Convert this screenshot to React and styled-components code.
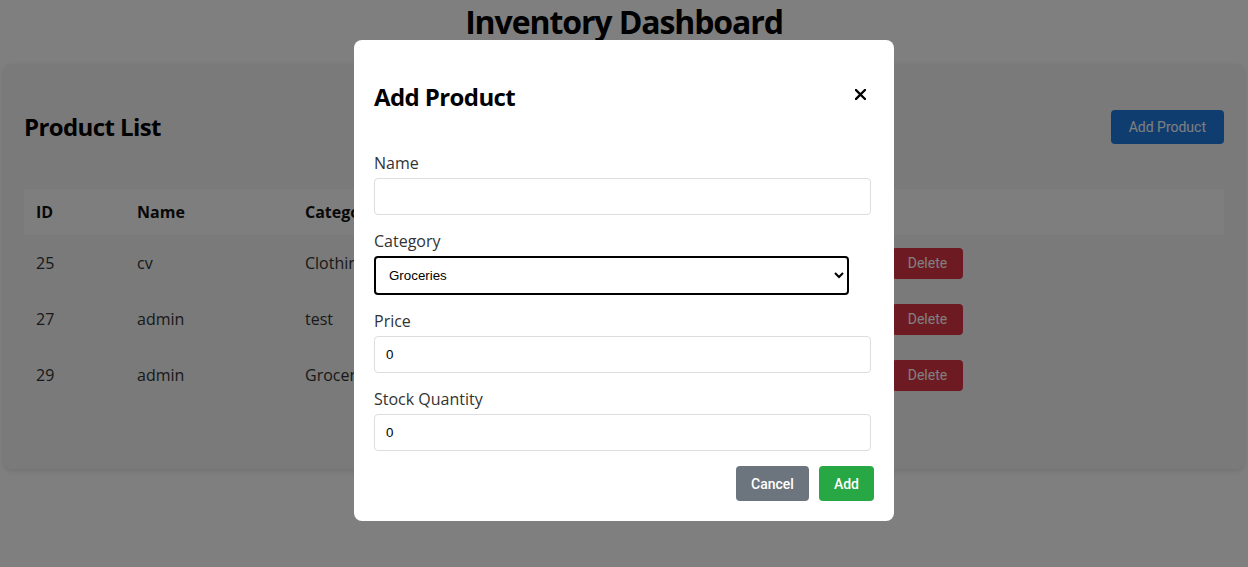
import React from "react";
import styled, { createGlobalStyle } from "styled-components";

const Global = createGlobalStyle`
  html, body { margin: 0; padding: 0; background: #ffffff; }
  body { font-family: "Open Sans", "Noto Sans", sans-serif; color: #333; }
  * { box-sizing: border-box; }
`;

const Page = styled.div`
  padding: 0 4px;
  min-height: 567px;
`;

const Title = styled.h1`
  margin: 0 0 20px;
  text-align: center;
  font-size: 32px;
  line-height: 44px;
  font-weight: 700;
  color: #000;
  letter-spacing: -1.1px;
`;

const Panel = styled.section`
  background: #f4f4f4;
  border-radius: 8px;
  padding: 20px 20px 66px;
  box-shadow: 0 2px 6px rgba(0, 0, 0, 0.12);
`;

const PanelHeader = styled.div`
  display: flex;
  align-items: center;
  justify-content: space-between;
  min-height: 85px;
  margin-bottom: 20px;
`;

const H2 = styled.h2`
  margin: 0;
  font-size: 24px;
  font-weight: 700;
  color: #000;
  letter-spacing: -0.6px;
`;

const Btn = styled.button`
  border: none;
  border-radius: 4px;
  color: #fff;
  font-family: Roboto, "Liberation Sans", sans-serif;
  font-size: 14px;
  font-weight: ${(p) => (p.$bold ? 500 : 400)};
  height: ${(p) => p.$h || 35}px;
  padding: 0 ${(p) => p.$px || 20}px;
  background: ${(p) => p.$bg};
  cursor: pointer;
`;

const Table = styled.table`
  width: 100%;
  border-collapse: collapse;
  font-size: 16px;
`;

const Th = styled.th`
  text-align: left;
  font-weight: 700;
  color: #111;
  padding: 12px;
  height: 45px;
  background: #fdfdfd;
  width: ${(p) => p.$w || "auto"};
`;

const Td = styled.td`
  padding: 12px;
  height: 56px;
  color: #333;
`;

const Actions = styled.div`
  display: flex;
  gap: 8px;
`;

const Overlay = styled.div`
  position: fixed;
  inset: 0;
  background: rgba(0, 0, 0, 0.5);
  display: flex;
  justify-content: center;
  align-items: flex-start;
  padding-top: 40px;
`;

const Modal = styled.div`
  width: 540px;
  background: #fff;
  border-radius: 8px;
  padding: 20px;
`;

const ModalHeader = styled.div`
  display: flex;
  align-items: center;
  justify-content: space-between;
  height: 72px;
  margin-bottom: 20px;
`;

const CloseBtn = styled.button`
  border: none;
  background: none;
  padding: 0 8px 0 0;
  width: 28px;
  height: 28px;
  display: flex;
  align-items: center;
  justify-content: flex-end;
  margin-top: -4px;
  cursor: pointer;
`;

const Group = styled.div`
  margin-bottom: 15px;
  display: flex;
  flex-direction: column;
`;

const Label = styled.label`
  font-size: 16px;
  line-height: 22px;
  color: #333;
  margin-bottom: 4px;
`;

const Input = styled.input`
  width: 497px;
  height: 37px;
  padding: 0 11px;
  border: 1px solid #ddd;
  border-radius: 4px;
  font-family: "Liberation Sans", Arial, sans-serif;
  font-size: 13.33px;
  color: #000;
  outline: none;
`;

const SelectWrap = styled.div`
  position: relative;
  width: 475px;
`;

const Select = styled.select`
  appearance: none;
  width: 100%;
  height: 39px;
  padding: 0 13px;
  border: 2px solid #000;
  border-radius: 4px;
  background: #fff;
  font-family: "Liberation Sans", Arial, sans-serif;
  font-size: 13.33px;
  color: #000;
  outline: none;
`;

const Chevron = styled.svg`
  position: absolute;
  right: 4px;
  top: 15px;
  pointer-events: none;
`;

const Footer = styled.div`
  display: flex;
  justify-content: flex-end;
  gap: 10px;
`;

const rows = [
  { id: 25, name: "cv", cat: "Clothing", price: "10.00", stock: 5 },
  { id: 27, name: "admin", cat: "test", price: "20.00", stock: 3 },
  { id: 29, name: "admin", cat: "Groceries", price: "5.00", stock: 10 },
];

export default function App() {
  return (
    <>
      <Global />
      <Page>
        <Title>Inventory Dashboard</Title>
        <Panel>
          <PanelHeader>
            <H2>Product List</H2>
            <Btn $bg="#1f7ae0" $px={18} $h={34}>Add Product</Btn>
          </PanelHeader>
          <Table>
            <thead>
              <tr>
                <Th $w="101px">ID</Th>
                <Th $w="168px">Name</Th>
                <Th $w="150px">Category</Th>
                <Th $w="130px">Price</Th>
                <Th $w="245px">Stock</Th>
                <Th>Actions</Th>
              </tr>
            </thead>
            <tbody>
              {rows.map((r) => (
                <tr key={r.id}>
                  <Td>{r.id}</Td>
                  <Td>{r.name}</Td>
                  <Td>{r.cat}</Td>
                  <Td>{r.price}</Td>
                  <Td>{r.stock}</Td>
                  <Td>
                    <Actions>
                      <Btn $bg="#ffc107" $px={15} $h={31}>Edit</Btn>
                      <Btn $bg="#dc3545" $px={16} $h={31}>Delete</Btn>
                    </Actions>
                  </Td>
                </tr>
              ))}
            </tbody>
          </Table>
        </Panel>
      </Page>
      <Overlay>
        <Modal>
          <ModalHeader>
            <H2>Add Product</H2>
            <CloseBtn aria-label="Close">
              <svg width="11" height="11" viewBox="0 0 11 11">
                <path d="M1 1 L10 10 M10 1 L1 10" stroke="#000" strokeWidth="2.3" strokeLinecap="square" />
              </svg>
            </CloseBtn>
          </ModalHeader>
          <Group>
            <Label>Name</Label>
            <Input defaultValue="" />
          </Group>
          <Group>
            <Label>Category</Label>
            <SelectWrap>
              <Select defaultValue="Groceries">
                <option>Clothing</option>
                <option>Electronics</option>
                <option>Groceries</option>
              </Select>
              <Chevron width="12" height="8" viewBox="0 0 12 8">
                <path d="M2 2 L6 6 L10 2" stroke="#000" strokeWidth="2" fill="none" />
              </Chevron>
            </SelectWrap>
          </Group>
          <Group>
            <Label>Price</Label>
            <Input defaultValue="0" />
          </Group>
          <Group>
            <Label>Stock Quantity</Label>
            <Input defaultValue="0" />
          </Group>
          <Footer>
            <Btn $bg="#6c757d" $bold $px={15}>Cancel</Btn>
            <Btn $bg="#28a745" $bold $px={15}>Add</Btn>
          </Footer>
        </Modal>
      </Overlay>
    </>
  );
}
